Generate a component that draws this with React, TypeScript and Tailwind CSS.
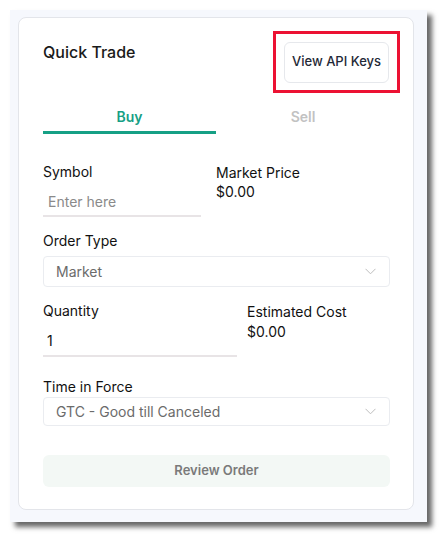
import { useState } from "react";

function Chevron() {
  return (
    <svg width="11" height="7" viewBox="0 0 11 7" fill="none" className="text-[#bdbdbd]">
      <path d="M0.5 0.8 L5.5 5.8 L10.5 0.8" stroke="currentColor" strokeWidth="1" />
    </svg>
  );
}

function SelectBox({ value, className }: { value: string; className: string }) {
  return (
    <div
      className={`flex w-full items-center justify-between rounded-[4px] border border-[#eaecf0] pl-[12px] pr-[13px] text-[14px] text-[#6b6b6b] ${className}`}
    >
      <span>{value}</span>
      <Chevron />
    </div>
  );
}

export default function App() {
  const [side, setSide] = useState<"buy" | "sell">("buy");
  const [symbol, setSymbol] = useState("");
  const [qty, setQty] = useState("1");

  return (
    <div className="min-h-[538px] bg-white pl-[10px] pt-[10px] font-['Inter',sans-serif]">
      <div className="h-[512px] w-[417px] bg-[#f6f8fd] pl-[8px] pt-[7px] shadow-[5px_5px_5px_rgba(0,0,0,0.6)]">
        <div className="flex h-[493px] w-[396px] flex-col rounded-[8px] border border-[#e3e5ea] bg-white pl-[24px] pr-[23px] pt-[13px]">
          <div className="flex items-start justify-between">
            <h2 className="mt-[11px] text-[16px] font-medium leading-[20px] text-[#1a1a1a]">
              Quick Trade
            </h2>
            <div className="mr-[-10px] flex h-[62px] w-[127px] items-center justify-center border-[3px] border-[#ec1233]">
              <button className="h-[41px] w-[105px] rounded-[6px] border border-[#e6e8ec] bg-white text-[13px] font-medium text-[#1f2937]">
                View API Keys
              </button>
            </div>
          </div>

          <div className="mt-[14px] flex">
            <button
              onClick={() => setSide("buy")}
              className={`w-[173px] border-b-[3px] pb-[4px] text-[14px] font-semibold leading-[20px] ${
                side === "buy" ? "border-[#16a085] text-[#16a085]" : "border-transparent text-[#c2c2c2]"
              }`}
            >
              Buy
            </button>
            <button
              onClick={() => setSide("sell")}
              className={`w-[174px] border-b-[3px] pb-[4px] text-[14px] font-semibold leading-[20px] ${
                side === "sell" ? "border-[#16a085] text-[#16a085]" : "border-transparent text-[#c2c2c2]"
              }`}
            >
              Sell
            </button>
          </div>

          <div className="mt-[28px] flex">
            <div className="w-[173px]">
              <label className="block text-[14px] leading-[20px] text-[#111]">Symbol</label>
              <input
                value={symbol}
                onChange={(e) => setSymbol(e.target.value)}
                placeholder="Enter here"
                className="mt-[5px] h-[30px] w-[158px] border-b-2 border-[#e8e4e6] px-[5px] text-[14px] text-[#111] outline-none placeholder:text-[#8a8a8a]"
              />
            </div>
            <div className="pt-[1px] text-[14px] leading-[19px] text-[#111]">
              <div>Market Price</div>
              <div>$0.00</div>
            </div>
          </div>

          <label className="mt-[14px] block text-[14px] leading-[20px] text-[#111]">Order Type</label>
          <SelectBox value="Market" className="mt-[5px] h-[31px]" />

          <div className="mt-[14px] flex">
            <div className="w-[204px]">
              <label className="block text-[14px] leading-[20px] text-[#111]">Quantity</label>
              <input
                value={qty}
                onChange={(e) => setQty(e.target.value)}
                className="mt-[5px] h-[31px] w-[194px] border-b-2 border-[#e8e4e6] px-[4px] text-[14px] text-[#111] outline-none"
              />
            </div>
            <div className="pt-[1px] text-[14px] leading-[20px] text-[#111]">
              <div>Estimated Cost</div>
              <div>$0.00</div>
            </div>
          </div>

          <label className="mt-[20px] block text-[14px] leading-[20px] text-[#111]">Time in Force</label>
          <SelectBox value="GTC - Good till Canceled" className="h-[29px]" />

          <button className="mt-[29px] h-[32px] w-full rounded-[6px] bg-[#f3f8f5] text-[13px] font-semibold text-[#7a7a7a]">
            Review Order
          </button>
        </div>
      </div>
    </div>
  );
}
